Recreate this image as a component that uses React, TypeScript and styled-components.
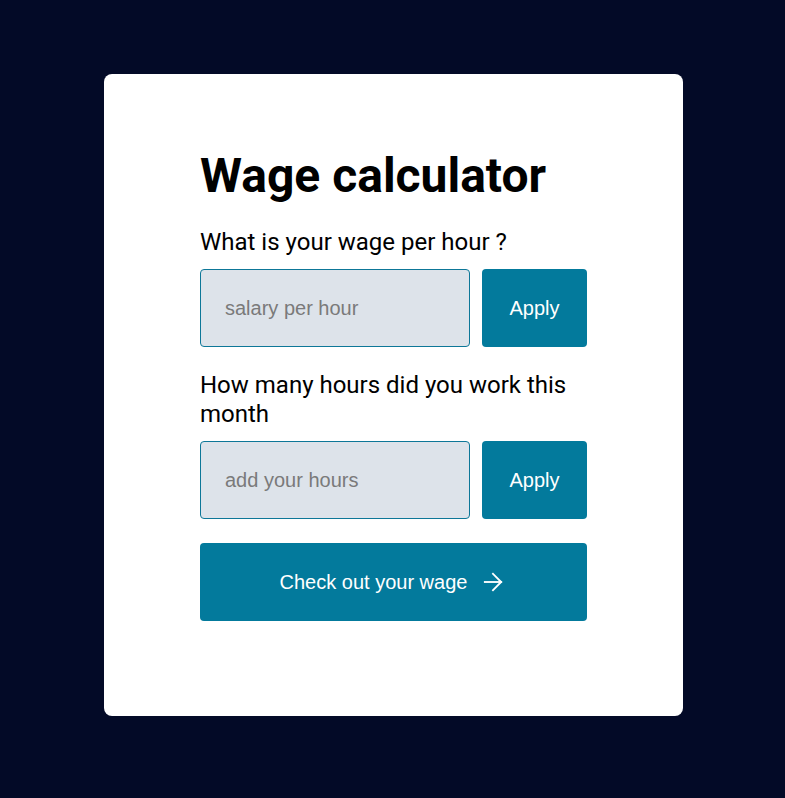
import React from "react";
import styled, { createGlobalStyle } from "styled-components";

const GlobalStyle = createGlobalStyle`
  html, body {
    margin: 0;
    padding: 0;
    background: #030a27;
  }
  body {
    font-family: Roboto, "Liberation Sans", sans-serif;
  }
  * { box-sizing: border-box; }
`;

const Page = styled.div`
  min-height: 798px;
  padding-top: 74px;
  padding-left: 2px;
  display: flex;
  justify-content: center;
  align-items: flex-start;
`;

const Card = styled.div`
  width: 579px;
  height: 642px;
  background: #ffffff;
  border-radius: 8px;
  padding: 74px 96px 0 96px;
  display: flex;
  flex-direction: column;
`;

const Title = styled.h1`
  margin: 0 0 24px 0;
  font-family: Roboto, sans-serif;
  font-weight: 700;
  font-size: 48px;
  line-height: 56px;
  color: #000;
`;

const Form = styled.div`
  display: flex;
  flex-direction: column;
  gap: 24px;
`;

const Field = styled.div`
  display: flex;
  flex-direction: column;
  gap: 12px;
`;

const Label = styled.label`
  font-family: Roboto, sans-serif;
  font-size: 24px;
  line-height: 29px;
  color: #000;
`;

const Row = styled.div`
  display: flex;
  gap: 12px;
`;

const Input = styled.input`
  width: 270px;
  height: 78px;
  border: 1px solid #0d7798;
  border-radius: 4px;
  background: #dde3ea;
  padding: 0 0 0 24px;
  font-family: "Liberation Sans", Arial, sans-serif;
  font-size: 20px;
  color: #222;
  outline: none;
  &::placeholder {
    color: #7a7a7a;
  }
`;

const Button = styled.button<{ $wide?: boolean }>`
  width: ${(p) => (p.$wide ? "100%" : "105px")};
  flex-shrink: 0;
  height: 78px;
  border: none;
  border-radius: 4px;
  background: #037a9c;
  color: #ffffff;
  font-family: "Liberation Sans", Arial, sans-serif;
  font-size: 20px;
  display: flex;
  align-items: center;
  justify-content: center;
  gap: 12px;
  cursor: pointer;
  padding: 0;
`;

const Arrow = () => (
  <svg width="28" height="28" viewBox="0 0 24 24" fill="none" stroke="currentColor" strokeWidth="1.6" strokeLinecap="square" strokeLinejoin="miter">
    <path d="M5 12h14" />
    <path d="M12 5l7 7-7 7" />
  </svg>
);

export default function App() {
  return (
    <>
      <GlobalStyle />
      <Page>
        <Card>
          <Title>Wage calculator</Title>
          <Form>
            <Field>
              <Label>What is your wage per hour ?</Label>
              <Row>
                <Input placeholder="salary per hour" />
                <Button>Apply</Button>
              </Row>
            </Field>
            <Field>
              <Label>How many hours did you work this month</Label>
              <Row>
                <Input placeholder="add your hours" />
                <Button>Apply</Button>
              </Row>
            </Field>
            <Button $wide>
              Check out your wage
              <Arrow />
            </Button>
          </Form>
        </Card>
      </Page>
    </>
  );
}
